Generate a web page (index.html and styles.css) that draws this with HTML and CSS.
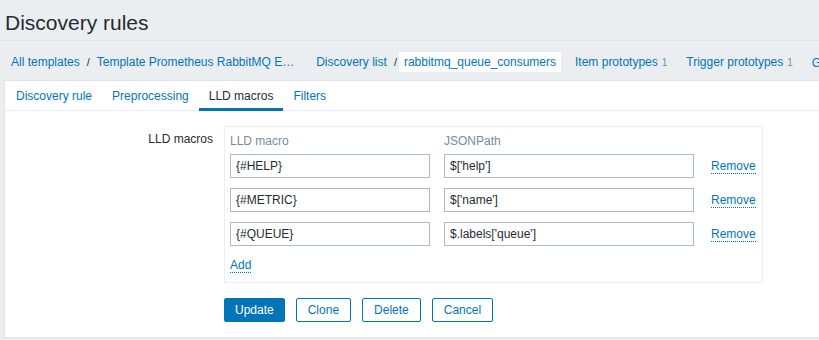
FILE: index.html
```html
<!DOCTYPE html>
<html lang="en">
<head>
    <meta charset="UTF-8">
    <title>Discovery rules</title>
    <link rel="stylesheet" href="styles.css">
</head>
<body>
    <header class="header-title">
        <h1>Discovery rules</h1>
    </header>

    <!-- Breadcrumbs / sub navigation -->
    <nav class="object-nav">
        <ul class="breadcrumbs">
            <li><a href="#">All templates</a></li>
            <li class="sep">/</li>
            <li><a href="#">Template Prometheus RabbitMQ E…</a></li>
        </ul>
        <ul class="breadcrumbs">
            <li><a href="#">Discovery list</a></li>
            <li class="sep">/</li>
            <li class="selected"><a href="#">rabbitmq_queue_consumers</a></li>
        </ul>
        <ul class="links">
            <li><a href="#">Item prototypes</a><sup>1</sup></li>
            <li><a href="#">Trigger prototypes</a><sup>1</sup></li>
            <li><a href="#">Graph prototypes</a></li>
        </ul>
    </nav>

    <main class="panel">
        <ul class="tabs">
            <li><a href="#">Discovery rule</a></li>
            <li><a href="#">Preprocessing</a></li>
            <li class="active"><a href="#">LLD macros</a></li>
            <li><a href="#">Filters</a></li>
        </ul>

        <div class="form-list">
            <label class="form-label">LLD macros</label>
            <div class="macro-table">
                <div class="macro-row head">
                    <span class="col-macro">LLD macro</span>
                    <span class="col-path">JSONPath</span>
                </div>
                <div class="macro-row">
                    <input class="col-macro" type="text" value="{#HELP}">
                    <input class="col-path" type="text" value="$['help']">
                    <a class="link-action" href="#">Remove</a>
                </div>
                <div class="macro-row">
                    <input class="col-macro" type="text" value="{#METRIC}">
                    <input class="col-path" type="text" value="$['name']">
                    <a class="link-action" href="#">Remove</a>
                </div>
                <div class="macro-row">
                    <input class="col-macro" type="text" value="{#QUEUE}">
                    <input class="col-path" type="text" value="$.labels['queue']">
                    <a class="link-action" href="#">Remove</a>
                </div>
                <div class="macro-row add">
                    <a class="link-action" href="#">Add</a>
                </div>
            </div>
        </div>

        <div class="form-buttons">
            <button class="btn-main">Update</button>
            <button class="btn-alt">Clone</button>
            <button class="btn-alt">Delete</button>
            <button class="btn-alt">Cancel</button>
        </div>
    </main>
</body>
</html>
```

FILE: styles.css
```css
body {
    margin: 0;
    width: 819px;
    height: 340px;
    overflow: hidden;
    background-color: #ebeef0;
    color: #1f2c33;
    font-family: "Liberation Sans", Arial, sans-serif;
    font-size: 12px;
}
a {
    color: #0275b8;
    text-decoration: none;
}
ul {
    list-style: none;
    margin: 0;
    padding: 0;
}

/* Titel */
.header-title {
    height: 41px;
    border-bottom: 1px solid #dde3e6;
    box-sizing: border-box;
}
.header-title h1 {
    margin: 0;
    padding: 9px 0 0 5px;
    font-size: 21px;
    font-weight: normal;
    line-height: 28px;
}

/* Navigation */
.object-nav {
    display: flex;
    align-items: flex-start;
    height: 39px;
    padding-top: 11px;
    box-sizing: border-box;
    white-space: nowrap;
}
.breadcrumbs, .links {
    display: flex;
    align-items: center;
    flex-shrink: 0;
}
.breadcrumbs {
    margin-right: 6px;
}
.breadcrumbs li {
    padding: 0 5px;
    line-height: 20px;
}
.breadcrumbs li:first-child {
    padding-left: 11px;
}
.breadcrumbs .sep {
    padding: 0 2px;
    font-size: 11px;
    color: #1f2c33;
}
.breadcrumbs .selected {
    background-color: #fff;
}
.links {
    padding-left: 5px;
}
.links li {
    padding: 0 16px 0 3px;
    line-height: 20px;
}
.links sup {
    vertical-align: baseline;
    color: #768d99;
    margin-left: 4px;
}

/* Panel */
.panel {
    margin-left: 4px;
    background-color: #fff;
    border: 1px solid #dfe4e7;
    border-right: none;
    height: 258px;
    box-sizing: border-box;
}
.tabs {
    display: flex;
    height: 30px;
    border-bottom: 1px solid #ebeef0;
    padding-left: 1px;
    box-sizing: border-box;
}
.tabs li {
    padding: 2px 10px 0;
    line-height: 26px;
    border-bottom: 3px solid transparent;
    margin-bottom: -1px;
}
.tabs .active {
    border-bottom-color: #0275b8;
}
.tabs .active a {
    color: #1f2c33;
}

/* Formular */
.form-list {
    display: flex;
    padding-top: 15px;
}
.form-label {
    width: 208px;
    text-align: right;
    padding-top: 6px;
    margin-right: 11px;
    line-height: 14px;
}
.macro-table {
    width: 539px;
    border: 1px solid #ebeef0;
    padding: 5px 5px 9px;
    box-sizing: border-box;
}
.macro-row {
    display: flex;
    align-items: center;
    margin-bottom: 10px;
}
.macro-row.head {
    height: 18px;
    margin-bottom: 4px;
    color: #768d99;
}
.col-macro {
    width: 200px;
    margin-right: 14px;
}
.col-path {
    width: 250px;
    margin-right: 17px;
}
input[type="text"] {
    height: 24px;
    padding: 0 5px;
    border: 1px solid #acbbc2;
    box-sizing: border-box;
    font-family: inherit;
    font-size: 12px;
    color: #1f2c33;
    background-color: #fff;
}
.link-action {
    border-bottom: 1px dotted #0275b8;
    line-height: 14px;
}
.macro-row.add {
    height: 16px;
    margin: 0;
    padding-top: 1px;
}

/* Buttons */
.form-buttons {
    display: flex;
    gap: 11px;
    padding: 15px 0 0 219px;
}
.form-buttons button {
    height: 24px;
    padding: 0 11px;
    border: 1px solid #0275b8;
    border-radius: 2px;
    font-family: inherit;
    font-size: 12px;
    cursor: pointer;
}
.form-buttons .btn-main {
    padding: 0 10px;
    background-color: #0275b8;
    color: #fff;
}
.btn-alt {
    background-color: #fff;
    color: #0275b8;
}
```
